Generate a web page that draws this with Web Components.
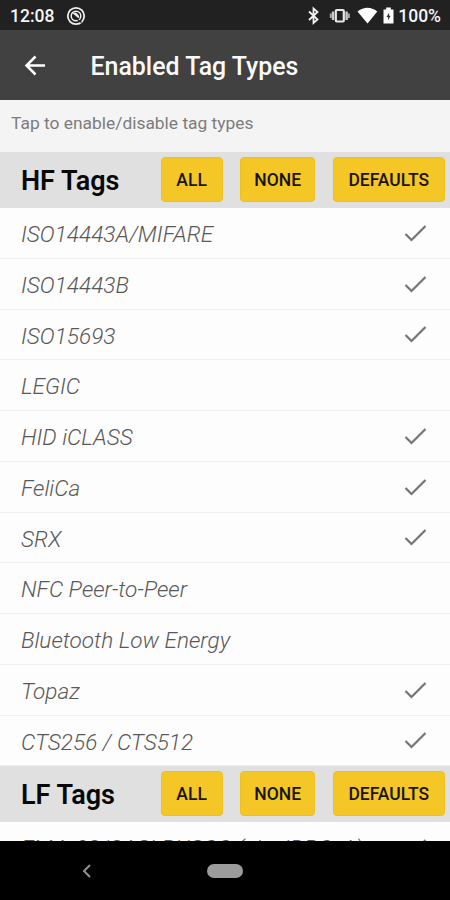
<!DOCTYPE html>
<html lang="en">
<head>
<meta charset="UTF-8">
<meta name="viewport" content="width=device-width, initial-scale=1.0">
<title>Enabled Tag Types</title>
<style>
  body {
    margin: 0;
    height: 900px;
    overflow: hidden;
    font-family: Roboto, "Liberation Sans", sans-serif;
  }
</style>
</head>
<body>
<tag-screen></tag-screen>

<script>
class StatusBar extends HTMLElement {
  connectedCallback() {
    this.attachShadow({ mode: 'open' });
    this.shadowRoot.innerHTML = `
      <style>
        :host {
          display: flex;
          align-items: center;
          box-sizing: border-box;
          height: 30px;
          padding: 2px 9px 0 10px;
          background: #212121;
          color: #f5f5f5;
          font-size: 17.5px;
          font-weight: 500;
          line-height: 28px;
        }
        svg { display: block; }
        .app { margin-left: 12px; }
        .right {
          display: flex;
          align-items: center;
          margin-left: auto;
        }
      </style>
      <span>12:08</span>
      <svg class="app" width="20" height="20" viewBox="0 0 20 20" fill="none" stroke="#eee">
        <circle cx="10" cy="10" r="8.2" stroke-width="1.8"/>
        <circle cx="10" cy="10" r="4.8" stroke-width="1.5"/>
        <path d="M6 7.200c3-1.800 6.500.2 7.500 4.600C10.800 12.500 9.500 8.500 6 7.200z" fill="#eee" stroke="none"/>
        <path d="M11.500 13.500l4 3" stroke="#212121" stroke-width="1.500"/>
      </svg>
      <div class="right">
        <svg width="92" height="22" viewBox="305 5 92 22">
          <path d="M308 11.500l8.500 8-4 3.500V8.500l4 3.500-8.500 8" fill="none" stroke="#f0f0f0" stroke-width="1.800"/>
          <rect x="334.800" y="10" width="8" height="11.500" rx="1" fill="none" stroke="#e8e8e8" stroke-width="2.2"/>
          <path d="M332 11.500v8.500M345.600 11.500v8.500" stroke="#ccc" stroke-width="2.400"/>
          <path d="M329.800 13.500v4.500M347.800 13.500v4.500" stroke="#aaa" stroke-width="2"/>
          <path d="M356.500 11.500Q366.500 4 376.300 11.500L366.500 23.500z" fill="#fff"/>
          <path d="M385.200 7.500h4.600v2h2.700V23.500h-10V9.500h2.700z" fill="#fff"/>
          <path d="M388.100 12.500l-2.600 4.500h1.600v3.200l2.600-4.500h-1.600z" fill="#333"/>
        </svg>
        <span>100%</span>
      </div>
    `;
  }
}
customElements.define('status-bar', StatusBar);

class AppBar extends HTMLElement {
  connectedCallback() {
    this.attachShadow({ mode: 'open' });
    this.shadowRoot.innerHTML = `
      <style>
        :host {
          display: flex;
          align-items: center;
          box-sizing: border-box;
          height: 70px;
          padding: 2px 0 0 24px;
          gap: 44.5px;
          background: #414141;
          color: #fafafa;
          font-size: 24.9px;
          font-weight: 500;
          white-space: nowrap;
        }
      </style>
      <svg width="22" height="22" viewBox="0 0 22 22" fill="none" stroke="#fff" stroke-width="2.500">
        <path d="M21 10.500H3M11.500 1.500l-9 9 9 9"/>
      </svg>
      <slot></slot>
    `;
  }
}
customElements.define('app-bar', AppBar);

class YellowButton extends HTMLElement {
  connectedCallback() {
    this.attachShadow({ mode: 'open' });
    this.shadowRoot.innerHTML = `
      <style>
        :host {
          display: flex;
          align-items: center;
          justify-content: center;
          box-sizing: border-box;
          height: 45px;
          border: 1px solid #efbf1c;
          border-radius: 4px;
          background: #f4c727;
          color: #181407;
          font-size: 17.5px;
          font-weight: 500;
          cursor: pointer;
        }
      </style>
      <slot></slot>
    `;
  }
}
customElements.define('yellow-button', YellowButton);

class SectionHeader extends HTMLElement {
  connectedCallback() {
    this.attachShadow({ mode: 'open' });
    this.shadowRoot.innerHTML = `
      <style>
        :host {
          display: grid;
          grid-template-columns: 122px 62px 75px 112px;
          column-gap: 17.6px;
          align-items: center;
          box-sizing: border-box;
          height: 56px;
          padding-left: 21px;
          border-bottom: 1px solid #eadfcf;
          background: #e0e0e0;
        }
        h2 {
          margin: 2px 0 0;
          color: #080808;
          font-size: 27px;
          font-weight: 600;
          white-space: nowrap;
        }
      </style>
      <h2><slot></slot></h2>
      <yellow-button>ALL</yellow-button>
      <yellow-button>NONE</yellow-button>
      <yellow-button>DEFAULTS</yellow-button>
    `;
  }
}
customElements.define('section-header', SectionHeader);

class TagRow extends HTMLElement {
  connectedCallback() {
    this.attachShadow({ mode: 'open' });
    this.shadowRoot.innerHTML = `
      <style>
        :host {
          display: flex;
          align-items: center;
          justify-content: space-between;
          box-sizing: border-box;
          height: 50.75px;
          padding: 2px 23px 0 21px;
          border-bottom: 1px solid #f0f0f0;
          background: #fdfdfd;
          color: #585858;
          font-size: 22.6px;
          font-style: italic;
          font-weight: 300;
          white-space: nowrap;
          cursor: pointer;
        }
        span { padding-top: 1.5px; }
        svg { display: none; }
        :host([checked]) svg { display: block; }
      </style>
      <span><slot></slot></span>
      <svg width="23" height="18" viewBox="0 0 23 18" fill="none" stroke="#747474" stroke-width="2.200">
        <path d="M1.500 9l6 6L21.500 1"/>
      </svg>
    `;
    this.addEventListener('click', () => this.toggleAttribute('checked'));
  }
}
customElements.define('tag-row', TagRow);

class NavBar extends HTMLElement {
  connectedCallback() {
    this.attachShadow({ mode: 'open' });
    this.shadowRoot.innerHTML = `
      <style>
        :host {
          display: grid;
          grid-template-columns: 1fr 36px 1fr;
          align-items: center;
          height: 59px;
          background: #000;
        }
        svg { margin-left: 82px; }
        .home {
          height: 14px;
          border-radius: 7px;
          background: #9c9c9c;
        }
      </style>
      <svg width="9" height="14" viewBox="0 0 9 14" fill="none" stroke="#929292" stroke-width="2">
        <path d="M8 1L2 7l6 6"/>
      </svg>
      <div class="home"></div>
    `;
  }
}
customElements.define('nav-bar', NavBar);

class TagScreen extends HTMLElement {
  connectedCallback() {
    this.attachShadow({ mode: 'open' });
    this.shadowRoot.innerHTML = `
      <style>
        :host {
          display: flex;
          flex-direction: column;
          width: 450px;
          height: 900px;
          background: #fdfdfd;
        }
        status-bar, app-bar, nav-bar { flex: none; }
        .hint {
          flex: none;
          box-sizing: border-box;
          height: 52px;
          padding: 11px 11px 0;
          background: #f4f4f4;
          color: #7c7c7c;
          font-size: 17.4px;
          line-height: 24px;
        }
        .list {
          flex: 1;
          min-height: 0;
          overflow: hidden;
        }
      </style>
      <status-bar></status-bar>
      <app-bar>Enabled Tag Types</app-bar>
      <div class="hint">Tap to enable/disable tag types</div>
      <div class="list">
        <section-header>HF Tags</section-header>
        <tag-row checked>ISO14443A/MIFARE</tag-row>
        <tag-row checked>ISO14443B</tag-row>
        <tag-row checked>ISO15693</tag-row>
        <tag-row>LEGIC</tag-row>
        <tag-row checked>HID iCLASS</tag-row>
        <tag-row checked>FeliCa</tag-row>
        <tag-row checked>SRX</tag-row>
        <tag-row>NFC Peer-to-Peer</tag-row>
        <tag-row>Bluetooth Low Energy</tag-row>
        <tag-row checked>Topaz</tag-row>
        <tag-row checked>CTS256 / CTS512</tag-row>
        <section-header>LF Tags</section-header>
        <tag-row checked>EM4x02/CASI-RUSCO (aka IDRO_A)</tag-row>
      </div>
      <nav-bar></nav-bar>
    `;
  }
}
customElements.define('tag-screen', TagScreen);
</script>
</body>
</html>
